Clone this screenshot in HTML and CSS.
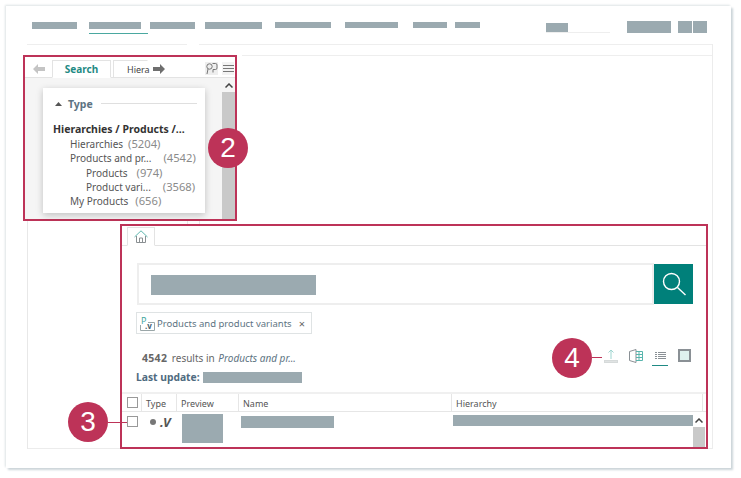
FILE: index.html
```html
<!DOCTYPE html>
<html lang="en">
<head>
<meta charset="utf-8">
<title>Search panel overview</title>
<link rel="stylesheet" href="styles.css">
</head>
<body>
<div class="card">
  <header class="topbar">
    <nav class="nav">
      <span class="nav-item n1"><i class="bar"></i></span>
      <span class="nav-item n2 active"><i class="bar"></i></span>
      <span class="nav-item n3"><i class="bar"></i></span>
      <span class="nav-item n4"><i class="bar"></i></span>
      <span class="nav-item n5 up"><i class="bar"></i></span>
      <span class="nav-item n6 up"><i class="bar"></i></span>
      <span class="nav-item n7 up"><i class="bar"></i></span>
      <span class="nav-item n8 up"><i class="bar"></i></span>
    </nav>
    <div class="user">
      <div class="user-field"><i class="bar uf"></i></div>
      <i class="bar ub1"></i>
      <i class="bar ub2"></i>
      <i class="bar ub3"></i>
    </div>
  </header>

  <div class="workspace">
    <div class="topline"><span class="seg-a"></span><span class="seg-b"></span></div>
    <div class="upper">
      <section class="panel-search hl">
        <div class="tabs">
          <svg class="arrow first" width="12" height="10" viewBox="0 0 12 10"><path d="M0 5 5 0V3H12V7H5V10Z" fill="#c4c4c4"/></svg>
          <span class="tab tab-on">Search</span>
          <span class="tab tab-off">Hiera</span>
          <svg class="arrow" width="12" height="10" viewBox="0 0 12 10"><path d="M12 5 7 0V3H0V7H7V10Z" fill="#6e6e6e"/></svg>
          <span class="tool tool-a">
            <svg width="13" height="13" viewBox="0 0 13 13" fill="none" stroke="#777" stroke-width="1"><circle cx="4.500" cy="4.500" r="2.700"/><path d="M3 7 2 12M7.500 1.500H10.500A1.500 1.500 0 0 1 12 3V6A1.500 1.500 0 0 1 10.500 7.500H8V10.500"/></svg>
          </span>
          <span class="tool tool-b">
            <svg width="11" height="9" viewBox="0 0 11 9" stroke="#777" stroke-width="1"><path d="M0 1.500H11M0 4.500H11M0 7.500H11"/></svg>
          </span>
        </div>
        <div class="panel-body">
          <div class="facet-card">
            <div class="facet-head">
              <svg width="7" height="4" viewBox="0 0 7 4"><path d="M0 4 3.500 0 7 4Z" fill="#555"/></svg>
              <span class="facet-title">Type</span>
              <span class="facet-rule"></span>
            </div>
            <div class="tree-root">Hierarchies / Products /...</div>
            <ul class="tree">
              <li class="l1"><span>Hierarchies</span><em class="gap5">(5204)</em></li>
              <li class="l1"><span>Products and pr...</span><em class="gap12">(4542)</em></li>
              <li class="l2"><span>Products</span><em class="gap9">(974)</em></li>
              <li class="l2"><span>Product vari...</span><em class="gap12">(3568)</em></li>
              <li class="l1"><span>My Products</span><em class="gap7">(656)</em></li>
            </ul>
          </div>
          <div class="scroll">
            <span class="scroll-up"><svg width="8" height="5" viewBox="0 0 8 5" fill="none" stroke="#444" stroke-width="1.500"><path d="M.5 4.500 4 1 7.500 4.500"/></svg></span>
            <span class="scroll-thumb"></span>
          </div>
        </div>
      </section>
      <div class="filler"></div>
    </div>
    <div class="lower">
      <div class="ticks"><span class="tick-a"></span><span class="tick-b"></span></div>

      <section class="panel-results hl">
        <div class="home-tabs">
          <span class="home-tab">
            <svg width="14" height="13" viewBox="0 0 14 13" fill="none" stroke-width="1"><path d="M.5 7 7 .8 13.500 7" stroke="#5fb8b0"/><path d="M2.500 6V12.500H11.500V6M5.500 12.500V8H8.500V12.500" stroke="#8a8f92"/></svg>
          </span>
        </div>
        <div class="search-row">
          <div class="search-input"><i class="bar query"></i></div>
          <button class="search-btn" type="button" aria-label="Search">
            <svg width="26" height="26" viewBox="0 0 26 26" fill="none" stroke="#fff" stroke-width="1.400"><circle cx="10.500" cy="10.500" r="8"/><path d="M16.500 16.500 24.500 24"/></svg>
          </button>
        </div>
        <div class="chip">
          <svg class="chip-icon" width="15" height="15" viewBox="0 0 15 15" fill="none"><path d="M.5 9V14.500H14.500V6.500H8" stroke="#9aa6a8"/><text x="1" y="8" class="chip-p">P</text><text x="5" y="13" class="chip-v">.v</text></svg>
          <span class="chip-label">Products and product variants</span>
          <span class="chip-x">×</span>
        </div>
        <div class="meta">
          <div class="meta-left">
            <p class="count"><b>4542</b> results in <em>Products and pr...</em></p>
            <p class="update"><b>Last update:</b><i class="bar up-val"></i></p>
          </div>
          <div class="actions">
            <span class="action">
              <svg width="14" height="15" viewBox="0 0 14 15" fill="none"><path d="M7 1V10M4.500 3.500 7 1 9.500 3.500" stroke="#9ed5d0"/><rect x="0.500" y="11.500" width="13" height="2" fill="#e0e3e3" stroke="#d6dada"/></svg>
            </span>
            <span class="action">
              <svg width="14" height="14" viewBox="0 0 14 14" fill="none"><path d="M.5 2.500 7 .5V13.500L.5 11.500Z" stroke="#8a9095"/><path d="M7 2.500H13.500V11.500H7M10 2.500V11.500M7 5.500H13.500M7 8.500H13.500" stroke="#58b5ad"/></svg>
            </span>
            <span class="action action-on">
              <svg width="11" height="8" viewBox="0 0 11 8" stroke="#8a9095"><path d="M0 .5H2M3 .5H11M0 2.500H2M3 2.500H11M0 4.500H2M3 4.500H11M0 6.500H2M3 6.500H11"/></svg>
            </span>
            <span class="action">
              <svg width="13" height="13" viewBox="0 0 13 13"><rect x="1" y="1" width="11" height="11" fill="#dff1ef" stroke="#8a9095" stroke-width="2"/></svg>
            </span>
          </div>
        </div>
        <div class="table">
          <div class="thead">
            <span class="th c-check"><i class="checkbox"></i></span>
            <span class="th c-type">Type</span>
            <span class="th c-preview">Preview</span>
            <span class="th c-name">Name</span>
            <span class="th c-hier">Hierarchy</span>
          </div>
          <div class="tbody">
            <div class="td-check"><i class="checkbox"></i></div>
            <div class="td-type"><span class="dot"></span><span class="type-mark">.V</span></div>
            <i class="bar preview"></i>
            <i class="bar name"></i>
            <i class="bar hier"></i>
            <div class="scroll scroll-table">
              <span class="scroll-up"><svg width="8" height="5" viewBox="0 0 8 5" fill="none" stroke="#444" stroke-width="1.500"><path d="M.5 4.500 4 1 7.500 4.500"/></svg></span>
              <span class="scroll-thumb"></span>
            </div>
          </div>
        </div>
      </section>
    </div>
  </div>
</div>

<span class="callout c2">2</span>
<span class="callout c3">3</span>
<span class="leader l3"></span>
<span class="callout c4">4</span>
<span class="leader l4"></span>
</body>
</html>
```
FILE: styles.css
```css
* { box-sizing: border-box; }
html, body { margin: 0; padding: 0; }
body {
  width: 741px;
  height: 478px;
  overflow: hidden;
  position: relative;
  background: #fff;
  font-family: "Noto Sans", "DejaVu Sans", sans-serif;
  font-size: 10px;
  color: #555;
}
i { font-style: normal; display: block; }
p { margin: 0; }
.bar { background: #9baab0; }

.card {
  margin: 6px 0 0 6px;
  width: 725px;
  height: 462px;
  background: #fff;
  padding-left: 21px;
  box-shadow: 2px 2px 2px #ccd5d9, -1px -1px 2px #dde3e5;
}

/* top bar */
.topbar {
  height: 38px;
  display: flex;
  justify-content: space-between;
  padding: 16px 0 0 5px;
  width: 680px;
}
.nav { display: flex; align-items: flex-start; }
.nav-item { display: block; height: 12px; }
.nav-item .bar { height: 7px; }
.nav-item.up .bar { height: 6px; }
.n1 { width: 45px; margin-right: 12px; }
.n2 { width: 59px; margin-right: 2px; }
.n2 .bar { width: 52px; }
.n3 { width: 45px; margin-right: 10px; }
.n4 { width: 57px; margin-right: 13px; }
.n5 { width: 56px; margin-right: 14px; }
.n6 { width: 53px; margin-right: 15px; }
.n7 { width: 34px; margin-right: 8px; }
.n8 { width: 25px; }
.active { border-bottom: 1px solid #4aa8a0; }
.user { display: flex; align-items: flex-start; margin-top: -1px; }
.user-field {
  width: 64px;
  height: 10px;
  margin: 2px 17px 0 0;
  border-bottom: 1px solid #eee;
}
.uf { width: 22px; height: 9px; }
.ub1 { width: 44px; height: 12px; margin-right: 7px; }
.ub2 { width: 14px; height: 12px; margin-right: 1px; }
.ub3 { width: 14px; height: 12px; }

/* workspace */
.workspace {
  width: 686px;
  height: 405px;
  border-right: 1px solid #ececec;
  border-bottom: 1px solid #ececec;
}
.topline { display: flex; height: 1px; }
.seg-a { width: 160px; background: #eee; }
.seg-b { flex: 1; margin-left: 12px; background: #eee; }
.upper { display: flex; height: 176px; padding-top: 10px; }
.filler { flex: 1; margin-left: 5px; border-top: 1px solid #eee; }
.lower { border-left: 1px solid #e8e8e8; height: 228px; }
.ticks {
  height: 3px;
  display: flex;
  padding-left: 159px;
}
.tick-a { width: 1px; background: #e8e8e8; }
.tick-b { width: 1px; margin-left: 11px; background: #e8e8e8; }

.hl { border: 2px solid #bd3358; background: #fff; }

/* search panel */
.panel-search {
  width: 214px;
  height: 166px;
  margin-left: -4px;
  display: flex;
  flex-direction: column;
}
.tabs {
  height: 21px;
  display: flex;
  align-items: flex-end;
  border-bottom: 1px solid #e3e3e3;
  position: relative;
}
.arrow { align-self: center; margin-top: 3px; }
.arrow.first { margin-left: 8px; margin-right: 7px; }
.tab {
  height: 18px;
  margin-bottom: -1px;
  border: 1px solid #e3e3e3;
  background: #fff;
  display: flex;
  align-items: center;
  justify-content: center;
}
.tab-on {
  width: 59px;
  color: #1f8a84;
  font-weight: 700;
  border-bottom-color: #fff;
}
.tab-off {
  width: 35px;
  margin-left: 2px;
  margin-right: 5px;
  border-right-color: transparent;
  color: #444;
  justify-content: flex-start;
  padding-left: 13px;
  font-size: 9px;
}
.tool { display: flex; align-items: center; justify-content: center; align-self: center; margin-top: 3px; }
.tool-a { margin-left: 40px; width: 13px; height: 13px; background: #eee; }
.tool-b { margin-left: 4px; width: 12px; height: 13px; background: #f3f3f3; }

.panel-body {
  flex: 1;
  display: flex;
  background: #f5f5f5;
  position: relative;
  padding: 10px 0 0 18px;
  justify-content: space-between;
  min-height: 0;
}
.facet-card {
  width: 162px;
  height: 125px;
  background: #fff;
  box-shadow: 0 2px 7px rgba(0, 0, 0, .22);
  padding: 7px 6px 0 10px;
}
.facet-head {
  display: flex;
  align-items: center;
  height: 17px;
  margin-left: 2px;
}
.facet-title { font-weight: 700; margin-left: 6px; color: #5d7382; font-size: 10.500px; }
.facet-rule { flex: 1; height: 1px; background: #dfdfdf; margin-left: 8px; margin-right: 2px; }
.tree-root {
  margin: 10px 0 0;
  font-size: 10.500px;
  font-weight: 700;
  color: #333;
  line-height: 15px;
  white-space: nowrap;
}
.tree { list-style: none; margin: 0; padding: 0; line-height: 14.300px; color: #555; }
.tree li { display: flex; white-space: nowrap; }
.tree em { font-style: normal; color: #8a8a8a; font-size: 11.200px; }
.l1 { padding-left: 17px; }
.l2 { padding-left: 33px; }
.gap5 { margin-left: 5px; }
.gap7 { margin-left: 7px; }
.gap9 { margin-left: 9px; }
.gap12 { margin-left: 12px; }
.scroll { width: 13px; display: flex; flex-direction: column; }
.panel-body > .scroll { margin-top: -10px; }
.scroll-up { height: 14px; display: flex; align-items: center; justify-content: center; }
.scroll-thumb { flex: 1; background: #c9c9c9; }

/* results panel */
.panel-results {
  width: 588px;
  height: 225px;
  margin-left: 92px;
  position: relative;
  padding-top: 1px;
}
.home-tabs { height: 19px; padding-left: 5px; border-bottom: 1px solid #e3e3e3; }
.home-tab {
  width: 28px;
  height: 19px;
  border: 1px solid #e3e3e3;
  border-bottom-color: #fff;
  display: flex;
  align-items: center;
  justify-content: center;
}
.search-row { display: flex; margin: 17px 13px 0 15px; height: 42px; }
.search-input {
  flex: 1;
  border: 2px solid #eee;
  padding: 10px 0 0 12px;
}
.query { width: 165px; height: 20px; }
.search-btn {
  width: 39px;
  height: 40px;
  margin-top: 1px;
  border: 0;
  padding: 0;
  background: #00807a;
  display: flex;
  align-items: center;
  justify-content: center;
}
.chip {
  margin: 7px 0 0 14px;
  width: 176px;
  height: 22px;
  border: 1px solid #dfe3e4;
  display: flex;
  align-items: center;
  padding-left: 3px;
  color: #5d7382;
  white-space: nowrap;
}
.chip-icon { margin-right: 2px; flex: none; overflow: visible; }
.chip-p { font-size: 9px; fill: #3fa69e; }
.chip-v { font-size: 8px; font-weight: 700; fill: #46606e; }
.chip-label { font-size: 9.500px; }
.chip-x { margin-left: 7px; color: #666; font-size: 11px; }

.meta { display: flex; justify-content: space-between; height: 58px; }
.meta-left { padding: 17px 0 0 14px; }
.count { padding-left: 6px; line-height: 14px; color: #666; white-space: nowrap; }
.count b { color: #666; font-size: 10.500px; letter-spacing: .3px; margin-right: 2px; }
.count em { color: #5d7382; margin-left: 1px; }
.update { display: flex; align-items: center; margin-top: 5px; height: 14px; }
.update b { color: #4f6b80; font-size: 10.300px; }
.up-val { width: 99px; height: 11px; margin-left: 3px; }
.actions { display: flex; align-items: flex-start; padding: 15px 14px 0 0; }
.action {
  display: flex;
  align-items: flex-start;
  justify-content: center;
  margin-left: 8px;
  width: 16px;
  height: 17px;
}
.action-on { padding-top: 3px; border-bottom: 1px solid #1f8a84; }
.actions .action:nth-child(1) { margin-left: 0; }
.actions .action:nth-child(2) { margin-left: 9px; }

.table { border-top: 2px solid #f0f0f0; }
.thead {
  display: flex;
  height: 18px;
  border-bottom: 1px solid #e6e6e6;
  color: #555;
  font-size: 9px;
}
.th {
  display: flex;
  align-items: center;
  padding: 1px 0 0 4px;
  border-right: 1px solid #e6e6e6;
}
.c-check { width: 20px; padding: 0 0 0 5px; }
.c-type { width: 35px; }
.c-preview { width: 62px; }
.c-name { width: 213px; }
.c-hier { width: 251px; }
.checkbox { width: 11px; height: 11px; border: 1px solid #999; background: #fff; }
.tbody { display: flex; align-items: flex-start; height: 36px; position: relative; }
.td-check { width: 25px; padding: 4px 0 0 5px; flex: none; }
.td-type { width: 35px; display: flex; align-items: center; padding: 3px 0 0 3px; flex: none; }
.dot { width: 6px; height: 6px; border-radius: 50%; background: #777; }
.type-mark { margin-left: 4px; font-weight: 700; font-style: italic; color: #555; font-size: 13px; line-height: 14px; }
.preview { width: 41px; height: 29px; margin: 2px 0 0 0; flex: none; }
.name { width: 93px; height: 12px; margin: 4px 0 0 18px; flex: none; }
.hier { width: 240px; height: 11px; margin: 3px 0 0 119px; flex: none; }
.scroll-table { height: 33px; margin-top: 2px; width: 12px; flex: none; }
.scroll-table .scroll-up { height: 13px; }

/* callouts */
.callout {
  position: absolute;
  width: 40px;
  height: 40px;
  border-radius: 50%;
  background: #bd3358;
  color: #fff;
  font-family: "Liberation Sans", Arial, sans-serif;
  font-size: 28px;
  line-height: 40px;
  text-align: center;
}
.c2 { left: 208px; top: 128px; }
.c3 { left: 68px; top: 402px; }
.c4 { left: 552px; top: 338px; }
.leader { position: absolute; height: 1px; background: #bd3358; }
.l3 { left: 108px; top: 422px; width: 19px; }
.l4 { left: 592px; top: 357px; width: 10px; }
```
